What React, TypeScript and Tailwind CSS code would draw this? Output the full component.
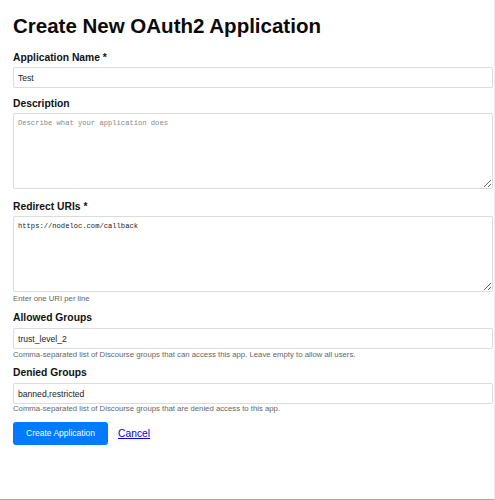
import React from "react";

const labelCls =
  "block text-[10.3px] leading-[12px] font-bold text-[#111]";
const inputCls =
  "block w-[480px] h-[21px] border border-[#dcdcdc] rounded-[2px] pl-[4px] text-[8.6px] text-[#222] bg-white outline-none font-['Liberation_Sans',Arial,sans-serif]";
const areaCls =
  "block w-[480px] h-[76px] border border-[#dcdcdc] rounded-[2px] px-[4px] pt-[5px] text-[7.15px] leading-[9px] text-[#222] placeholder:text-[#888] bg-white outline-none font-['Liberation_Mono','Courier_New',monospace]";
const helpCls = "block text-[7.75px] leading-[9px] text-[#666]";

export default function App() {
  return (
    <div className="relative w-[495px] h-[500px] bg-white overflow-hidden border-r border-b border-r-[#e9edf1] border-b-[#9ea9b5] font-['Liberation_Sans',Arial,sans-serif]">
      <div className="pl-[13px] pt-[14px]">
        <h1 className="text-[20.5px] leading-[24px] font-bold text-[#0a0a0a]">
          Create New OAuth2 Application
        </h1>

        <label className={labelCls + " mt-[14px] mb-[3px]"}>Application Name *</label>
        <input className={inputCls} defaultValue="Test" readOnly />

        <label className={labelCls + " mt-[10px] mb-[3px]"}>Description</label>
        <textarea
          className={areaCls}
          placeholder="Describe what your application does"
          readOnly
        />

        <label className={labelCls + " mt-[12px] mb-[3px]"}>Redirect URIs *</label>
        <textarea
          className={areaCls}
          defaultValue="https://nodeloc.com/callback"
          readOnly
        />
        <span className={helpCls + " mt-[2px]"}>Enter one URI per line</span>

        <label className={labelCls + " mt-[9px] mb-[4px]"}>Allowed Groups</label>
        <input className={inputCls} defaultValue="trust_level_2" readOnly />
        <span className={helpCls + " mt-[1px]"}>
          Comma-separated list of Discourse groups that can access this app. Leave empty to allow all users.
        </span>

        <label className={labelCls + " mt-[8px] mb-[4px]"}>Denied Groups</label>
        <input className={inputCls} defaultValue="banned,restricted" readOnly />
        <span className={helpCls}>
          Comma-separated list of Discourse groups that are denied access to this app.
        </span>

        <div className="mt-[9px] flex items-center gap-[10px]">
          <button className="h-[23px] w-[95px] rounded-[3px] bg-[#007bff] text-white text-[8.5px] font-['Liberation_Sans',Arial,sans-serif]">
            Create Application
          </button>
          <a href="#" className="text-[10.3px] text-[#0000ee] underline">
            Cancel
          </a>
        </div>
      </div>
    </div>
  );
}
